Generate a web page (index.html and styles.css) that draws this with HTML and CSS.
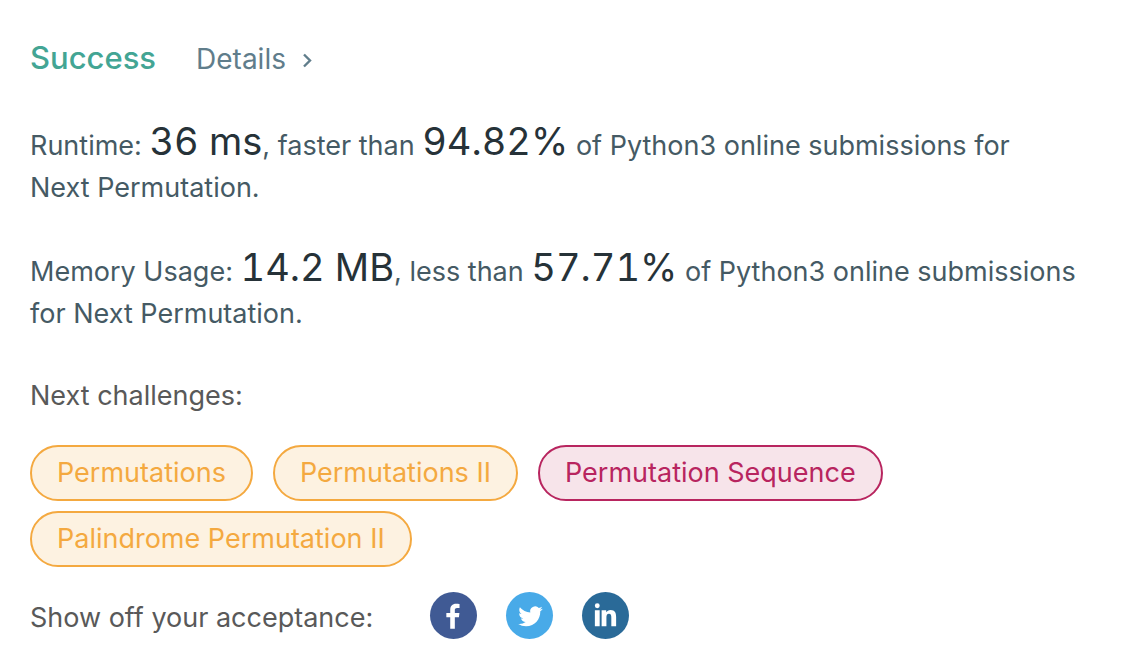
FILE: index.html
```html
<!DOCTYPE html>
<html lang="en">
<head>
<meta charset="utf-8">
<meta name="viewport" content="width=device-width, initial-scale=1">
<title>Submission result</title>
<link rel="stylesheet" href="styles.css">
</head>
<body>
<main class="result">
  <header class="result-header">
    <h1 class="status">Success</h1>
    <a class="details" href="#">Details
      <svg class="chevron" viewBox="0 0 12 18" aria-hidden="true"><path d="M2 4.5 8 10.5l-6 6"/></svg>
    </a>
  </header>
  <p class="stat">Runtime: <span class="value">36 ms</span>, faster than <span class="value">94.82%</span> of Python3 online submissions for <span class="problem">Next Permutation.</span></p>
  <p class="stat">Memory Usage: <span class="value">14.2 MB</span>, less than <span class="value">57.71%</span> of Python3 online submissions for <span class="problem">Next Permutation.</span></p>
  <h2 class="next-title">Next challenges:</h2>
  <nav class="challenges">
    <a class="tag medium" href="#">Permutations</a>
    <a class="tag medium" href="#">Permutations II</a>
    <a class="tag hard" href="#">Permutation Sequence</a>
    <a class="tag medium" href="#">Palindrome Permutation II</a>
  </nav>
  <footer class="share">
    <span class="share-label">Show off your acceptance:</span>
    <div class="share-links">
      <a class="social facebook" href="#" aria-label="Facebook"><svg viewBox="0 0 46 46"><path d="M19.8 36V24.8H16v-4.2h3.8v-2.9c0-4 2-6.2 5.8-6.2 1.3 0 2.6.1 3.3.2v4h-2.3c-2 0-2.3.9-2.3 2.2v2.7h4.5l-.5 4.2h-4V36z"/></svg></a>
      <a class="social twitter" href="#" aria-label="Twitter"><svg viewBox="0 0 46 46"><path transform="translate(12 11.8)" d="M23.95 4.57a10 10 0 0 1-2.82.78 4.96 4.96 0 0 0 2.16-2.73c-.95.56-2 .96-3.13 1.18a4.92 4.92 0 0 0-8.38 4.49A13.98 13.98 0 0 1 1.64 3.16a4.93 4.93 0 0 0 1.52 6.57 4.9 4.9 0 0 1-2.23-.61v.06a4.93 4.93 0 0 0 3.95 4.83 5 5 0 0 1-2.21.08 4.94 4.94 0 0 0 4.6 3.42A9.87 9.87 0 0 1 0 19.54a13.94 13.94 0 0 0 7.55 2.21c9.05 0 14-7.5 14-13.98 0-.21 0-.42-.02-.63A9.94 9.94 0 0 0 24 4.59z"/></svg></a>
      <a class="social linkedin" href="#" aria-label="LinkedIn"><svg viewBox="0 0 46 46"><path d="M12.6 17.9h4.7v15.6h-4.7zM14.95 11a2.4 2.4 0 1 1 0 4.8 2.4 2.4 0 0 1 0-4.8zM19.2 17.9h4.5v2c.8-1.4 2.2-2.4 4.3-2.4 4.4 0 5.4 2.9 5.4 7v9h-4.7v-8.1c0-2.1-.2-4-2.3-4-2 0-2.5 1.6-2.5 3.8v8.3h-4.7z"/></svg></a>
    </div>
  </footer>
</main>
</body>
</html>
```
FILE: styles.css
```css
* { box-sizing: border-box; }
body {
  margin: 0;
  background: #fff;
  color: #546e7a;
  font-family: Inter, "Liberation Sans", sans-serif;
  font-size: 27px;
  line-height: 42px;
}
a { color: inherit; text-decoration: none; }
.result { padding: 37px 30px 28px; }
.result-header { display: flex; align-items: baseline; gap: 40px; margin-bottom: 45px; }
.status { margin: 0; color: #43a594; font-size: 31px; font-weight: 500; }
.details { display: flex; align-items: center; gap: 16px; color: #607d8b; font-size: 28px; }
.chevron { width: 12px; height: 18px; fill: none; stroke: currentColor; stroke-width: 2.4; }
.stat { margin: 0 0 42px; color: #455a64; }
.value { color: #263238; font-size: 38px; line-height: 32px; font-variant-numeric: tabular-nums; }
.problem { white-space: nowrap; }
.next-title { margin: 0 0 30px; color: #595959; font-size: 27px; font-weight: 400; line-height: 38px; }
.challenges { display: flex; flex-wrap: wrap; gap: 10px 20px; margin-bottom: 25px; }
.tag { padding: 5px 25px; border: 2px solid currentColor; border-radius: 28px; }
.medium { color: #f4a940; background: #fdf2e1; }
.hard { color: #b8255f; background: #f7e4ea; }
.share { display: flex; align-items: center; gap: 57px; color: #595959; }
.share-label { padding-top: 4px; }
.share-links { display: flex; gap: 29px; }
.social { width: 47px; height: 47px; border-radius: 50%; }
.social svg { display: block; width: 47px; height: 47px; fill: #fff; }
.facebook { background: #405a94; }
.twitter { background: #48aae8; }
.linkedin { background: #2a6a98; }
```
